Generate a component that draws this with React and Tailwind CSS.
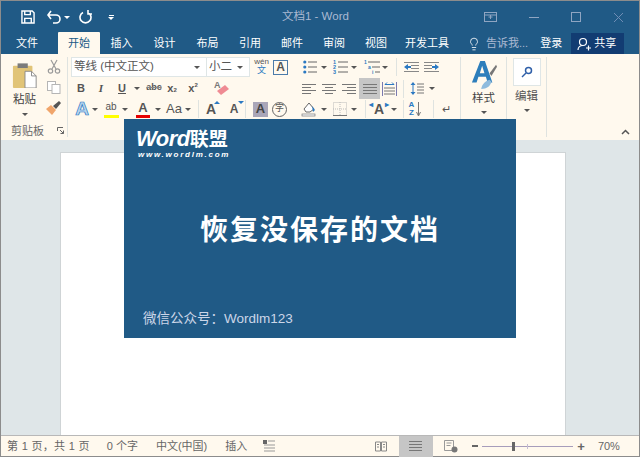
import { Lightbulb } from "lucide-react";

const font = "font-['Liberation_Sans','Noto_Sans_CJK_SC',sans-serif]";

function Caret({ className = "" }) {
  return <span className={`block w-0 h-0 border-x-[3px] border-x-transparent border-t-[3px] border-t-[#555] ${className}`} />;
}

function Slot({ w, className = "", children }) {
  return <div style={{ width: w }} className={`h-[18px] shrink-0 flex items-center justify-center ${className}`}>{children}</div>;
}

function Sep() {
  return <div className="w-px h-[18px] bg-[#dfe3e0] shrink-0" />;
}

function Lines({ rows, className = "" }) {
  return (
    <svg width="16" height="12" viewBox="0 0 16 12" className={className}>
      {rows.map(([x1, x2], i) => (
        <line key={i} x1={x1} x2={x2} y1={1.5 + i * 3} y2={1.5 + i * 3} stroke="#777" strokeWidth="1" />
      ))}
    </svg>
  );
}

function Bullets() {
  return (
    <svg width="14" height="14" viewBox="0 0 14 14">
      {[2, 7, 12].map((y) => (
        <g key={y}>
          <circle cx="1.8" cy={y} r="1.6" fill="#2b79c2" />
          <line x1="5" x2="14" y1={y} y2={y} stroke="#666" />
        </g>
      ))}
    </svg>
  );
}

function Numbers() {
  return (
    <svg width="15" height="16" viewBox="0 0 15 16">
      {[1, 2, 3].map((n) => (
        <g key={n}>
          <text x="0" y={n * 5} fontSize="5.5" fontWeight="700" fill="#2b79c2">{n}</text>
          <line x1="5" x2="15" y1={n * 5 - 2} y2={n * 5 - 2} stroke="#666" />
        </g>
      ))}
    </svg>
  );
}

function Multi() {
  return (
    <svg width="16" height="16" viewBox="0 0 16 16">
      <text x="0" y="5" fontSize="5" fontWeight="700" fill="#2b79c2">1</text>
      <line x1="4" x2="16" y1="3" y2="3" stroke="#666" />
      <text x="4" y="10" fontSize="5" fontWeight="700" fill="#2b79c2">a</text>
      <line x1="8" x2="16" y1="8" y2="8" stroke="#666" />
      <text x="8" y="15" fontSize="5" fontWeight="700" fill="#2b79c2">i</text>
      <line x1="11" x2="16" y1="13" y2="13" stroke="#666" />
    </svg>
  );
}

function Indent({ flip }) {
  return (
    <svg width="15" height="12" viewBox="0 0 15 12" className={flip ? "-scale-x-100" : ""}>
      {[1, 4, 7, 10].map((y) => (
        <line key={y} x1={y === 1 || y === 10 ? 0 : 7} x2="15" y1={y + 0.5} y2={y + 0.5} stroke="#888" />
      ))}
      <path d="M0 6l4-3v2h3v2H4v2z" fill="#2b79c2" />
    </svg>
  );
}

function Clipboard() {
  return (
    <svg width="26" height="26" viewBox="0 0 28 28">
      <rect x="1" y="4" width="21" height="24" rx="1" fill="#e1c477" />
      <rect x="6" y="1.5" width="11" height="5" fill="#7b7b7b" />
      <path d="M14 10h7l5 5v13H14z" fill="#fff" stroke="#888" />
      <path d="M21 10v5h5" fill="none" stroke="#888" />
    </svg>
  );
}

function Scissors() {
  return (
    <svg width="14" height="15" viewBox="0 0 14 15" fill="none" stroke="#9a9a9a" strokeWidth="1.2">
      <path d="M4 1l5 9M10 1L5 10" />
      <circle cx="3.5" cy="12" r="2.2" />
      <circle cx="10.5" cy="12" r="2.2" />
    </svg>
  );
}

function Copy() {
  return (
    <svg width="14" height="13" viewBox="0 0 14 13" fill="#fff" stroke="#b5b5b5">
      <rect x="0.5" y="0.5" width="8" height="9" />
      <rect x="5" y="3.5" width="8" height="9" />
    </svg>
  );
}

function Painter() {
  return (
    <svg width="15" height="14" viewBox="0 0 15 14">
      <path d="M0 8l5-4 5 5-4 5z" fill="#f0a56b" />
      <path d="M7 5l6-5 2 2-5 6z" fill="#555" />
    </svg>
  );
}

function Eraser() {
  return (
    <svg width="16" height="16" viewBox="0 0 16 16">
      <text x="0" y="8" fontSize="9" fontWeight="700" fill="#777">A</text>
      <path d="M3 11l8-6 4 4-8 6z" fill="#ef8b93" />
    </svg>
  );
}

function Bucket() {
  return (
    <svg width="16" height="16" viewBox="0 0 16 16">
      <path d="M3 8l5-6 5 6-4 3H5z" fill="#fff" stroke="#666" />
      <path d="M11 5l3 4-2 2z" fill="#2b79c2" />
      <rect x="1" y="13" width="13" height="2" fill="#fff" stroke="#777" strokeWidth="0.7" />
    </svg>
  );
}

function Borders() {
  return (
    <svg width="14" height="14" viewBox="0 0 14 14" fill="none" stroke="#bbb" strokeDasharray="1 1">
      <rect x="0.5" y="0.5" width="13" height="13" />
      <path d="M7 0v14M0 7h14" />
      <path d="M0 13.5h14" stroke="#777" strokeDasharray="none" />
    </svg>
  );
}

function StyleIcon() {
  return (
    <svg width="26" height="30" viewBox="0 0 28 32">
      <path d="M1 24L10 1h5l8 23h-5l-2-6H8l-2 6zM9.5 14h5L12 6z" fill="#2d7ebb" />
      <path d="M20 14l7-9 1 2-6 10z" fill="#777" />
      <path d="M11 31c1-6 5-9 9-10l2 2c-1 5-5 8-11 8z" fill="#8fbbdd" />
    </svg>
  );
}

function Font1() {
  return (
    <div className="flex items-center h-5">
      <div className="w-[136px] h-5 bg-white border border-[#dfe6e6] flex items-center justify-between px-[2px] text-[11.5px] text-[#555]">
        <span>等线 (中文正文)</span>
        <Caret className="mr-[4px]" />
      </div>
      <div className="w-[43px] h-5 bg-white border border-[#dfe6e6] border-l-0 flex items-center justify-between px-[2px] text-[11.5px] text-[#555]">
        <span>小二</span>
        <Caret className="mr-[4px]" />
      </div>
      <div className="w-[21px] ml-[1px] h-5 flex flex-col items-center leading-[9px] text-[8px] text-[#555]">
        <span>wén</span>
        <span className="text-[9px] text-[#2b79c2]">文</span>
      </div>
      <div className="ml-[1px] w-[15px] h-[15px] border border-[#4b7baa] flex items-center justify-center text-[12px] font-bold text-[#555]">A</div>
    </div>
  );
}

function Font2() {
  return (
    <div className="flex items-center mt-[2px] text-[#555]">
      <Slot w={18} className="ml-[1px] text-[11px] font-bold">B</Slot>
      <Slot w={22} className="text-[11px] italic font-['Liberation_Serif',serif] font-bold">I</Slot>
      <Slot w={20} className="text-[11px] font-bold underline">U</Slot>
      <Slot w={10}><Caret /></Slot>
      <Slot w={24} className="text-[9px] font-bold line-through decoration-[#888]">abc</Slot>
      <Slot w={12} className="text-[11px] font-bold">x<sub className="text-[6px] leading-none">2</sub></Slot>
      <Slot w={20} className="ml-[5px] text-[11px] font-bold">x<sup className="text-[6px] leading-none">2</sup></Slot>
      <Slot w={38}><Eraser /></Slot>
    </div>
  );
}

function Font3() {
  return (
    <div className="flex items-center mt-[3px] text-[#555]">
      <Slot w={20} className="ml-[1px] text-[19px] font-bold text-[#b9d6ef] [-webkit-text-stroke:0.7px_#2b79c2]">A</Slot>
      <Slot w={6}><Caret /></Slot>
      <Slot w={22} className="relative ml-[2px]">
        <span className="text-[10px] leading-none -mt-[5px]">ab</span>
        <span className="absolute left-[4px] bottom-0 w-[15px] h-[3px] bg-[#ffff00]" />
      </Slot>
      <Slot w={6}><Caret /></Slot>
      <Slot w={24} className="relative ml-[3px]">
        <span className="text-[13px] font-bold leading-none -mt-[3px]">A</span>
        <span className="absolute left-[5px] bottom-0 w-[14px] h-[3px] bg-[#e60000]" />
      </Slot>
      <Slot w={6}><Caret /></Slot>
      <Slot w={22} className="ml-[2px] text-[13px]">Aa</Slot>
      <Slot w={6}><Caret /></Slot>
      <Slot w={7} />
      <Sep />
      <Slot w={18} className="ml-[3px] text-[14px] font-bold relative">
        A<span className="absolute top-[1px] right-0 w-0 h-0 border-x-[3px] border-x-transparent border-b-[3px] border-b-[#2b79c2]" />
      </Slot>
      <Slot w={22} className="ml-[3px] text-[12px] font-bold relative">
        A<span className="absolute top-[1px] right-[1px] w-0 h-0 border-x-[3px] border-x-transparent border-t-[3px] border-t-[#2b79c2]" />
      </Slot>
      <Sep />
      <div className="ml-[7px] w-[15px] h-[15px] bg-[#aaa6b8] flex items-center justify-center text-[13px] font-bold text-[#444]">A</div>
      <div className="ml-[4px] w-[15px] h-[15px] rounded-full border border-[#666] flex items-center justify-center text-[9px]">字</div>
    </div>
  );
}

function Para() {
  return (
    <div className="w-[163px] shrink-0 pt-[3px] text-[#555]">
      <div className="flex items-center h-[20px]">
        <Slot w={18} className="ml-[4px]"><Bullets /></Slot>
        <Slot w={8} className="ml-[1px]"><Caret /></Slot>
        <Slot w={18} className="ml-[3px]"><Numbers /></Slot>
        <Slot w={8} className="ml-[1px]"><Caret /></Slot>
        <Slot w={18} className="ml-[5px]"><Multi /></Slot>
        <Slot w={8}><Caret /></Slot>
        <Slot w={7} />
        <Sep />
        <Slot w={20} className="ml-[4px]"><Indent /></Slot>
        <Slot w={20}><Indent flip /></Slot>
      </div>
      <div className="flex items-center mt-[1px] h-[21px]">
        <Slot w={20} className="ml-[2px]"><Lines rows={[[1, 15], [1, 10], [1, 15], [1, 10]]} /></Slot>
        <Slot w={20}><Lines rows={[[1, 15], [4, 12], [1, 15], [4, 12]]} /></Slot>
        <Slot w={20}><Lines rows={[[1, 15], [6, 15], [1, 15], [6, 15]]} /></Slot>
        <div className="w-[21px] h-[21px] bg-[#c6c6c6] flex items-center justify-center shrink-0"><Lines rows={[[1, 15], [1, 15], [1, 15], [1, 15]]} /></div>
        <Slot w={19}>
          <svg width="15" height="14" viewBox="0 0 15 14">
            <path d="M0.5 0v14M14.5 0v14" stroke="#7a7ab0" />
            <path d="M3 2.5h9M3 2.5l2-2M12 2.5l-2-2" stroke="#2b79c2" fill="none" />
            <path d="M2 6h11M2 9h11M2 12h11" stroke="#777" />
          </svg>
        </Slot>
        <Slot w={4} />
        <Sep />
        <Slot w={22} className="ml-[2px]">
          <svg width="14" height="15" viewBox="0 0 14 15">
            <path d="M3 1l2.5 3h-5zM3 14l2.5-3h-5zM2.5 4h1v7h-1z" fill="#2b79c2" />
            <path d="M7 3h7M7 6h7M7 9h7M7 12h7" stroke="#777" />
          </svg>
        </Slot>
        <Slot w={8}><Caret /></Slot>
      </div>
      <div className="flex items-center mt-[1px]">
        <Slot w={20} className="ml-[2px]"><Bucket /></Slot>
        <Slot w={8} className="ml-[1px]"><Caret /></Slot>
        <Slot w={18} className="ml-[3px]"><Borders /></Slot>
        <Slot w={8} className="ml-[1px]"><Caret /></Slot>
        <Slot w={7} />
        <Sep />
        <Slot w={22} className="ml-[2px] text-[14px] font-bold relative">
          A<span className="absolute -top-[1px] left-[1px] text-[8px] text-[#2b79c2]">◂</span>
          <span className="absolute -top-[1px] right-[1px] text-[8px] text-[#2b79c2]">▸</span>
        </Slot>
        <Slot w={8}><Caret /></Slot>
        <Slot w={5} />
        <Sep />
        <Slot w={22} className="text-[8px] leading-[8px] font-bold text-[#2b79c2] gap-[2px]">
          <span className="flex flex-col items-center"><span>A</span><span>Z</span></span>
          <svg width="5" height="15" viewBox="0 0 5 15"><path d="M2.5 0v13M0.5 10l2 4 2-4" stroke="#777" fill="none" /></svg>
        </Slot>
        <Slot w={7} />
        <Sep />
        <Slot w={24} className="text-[11px]">↵</Slot>
      </div>
    </div>
  );
}

export default function App() {
  const tabs = [["插入", 43], ["设计", 43], ["布局", 43], ["引用", 42], ["邮件", 42], ["审阅", 42], ["视图", 42]];

  return (
    <div className={`relative w-[640px] h-[457px] overflow-hidden flex flex-col border border-b-0 border-[#8c8c8c] bg-[#dfe6e8] ${font}`}>
      {/* title bar */}
      <div className="h-[32px] shrink-0 bg-[#205a86] flex items-center text-[#aab9d2] text-[11px]">
        <svg width="14" height="14" viewBox="0 0 15 15" className="ml-[20px]" fill="none" stroke="#fff" strokeWidth="1.5">
          <path d="M1 1h11l2 2v11H1z" />
          <path d="M4 1v4h6V1M4 14V9h7v5" />
        </svg>
        <svg width="14" height="14" viewBox="0 0 14 14" className="ml-[12px]" fill="none" stroke="#fff" strokeWidth="1.6">
          <path d="M1 5h8a4 4 0 0 1 0 8H6M4 1L1 5l3 4" />
        </svg>
        <Caret className="ml-[3px] border-t-white" />
        <svg width="14" height="14" viewBox="0 0 14 14" className="ml-[9px]" fill="none" stroke="#fff" strokeWidth="1.6">
          <path d="M4 2.5a5.5 5.5 0 1 0 5 0M9 0v4h4" />
        </svg>
        <div className="ml-[15px] flex flex-col items-center gap-[1px]">
          <span className="w-[5px] h-px bg-white" />
          <Caret className="border-t-white" />
        </div>
        <span className="ml-[168px] w-[70px] text-[11.5px] whitespace-nowrap">文档1 - Word</span>
        <svg width="13" height="10" viewBox="0 0 13 10" className="ml-[132px]" fill="none" stroke="#8fa5c2">
          <rect x="0.5" y="0.5" width="12" height="9" />
          <path d="M0 3h13M6.5 3v4M4.5 5h4" />
        </svg>
        <span className="ml-[32px] w-[10px] h-px bg-[#8fa5c2]" />
        <span className="ml-[32px] w-[10px] h-[10px] border border-[#8fa5c2]" />
        <svg width="11" height="11" viewBox="0 0 11 11" className="ml-[32px]" stroke="#6f8db5"><path d="M1 1l9 9M10 1l-9 9" /></svg>
      </div>

      {/* tabs */}
      <div className="h-[21px] shrink-0 bg-[#205a86] flex items-end text-[11px] text-white">
        <div className="w-[57px] h-[21px] flex items-center pl-[15px]">文件</div>
        <div className="w-[42px] h-[22px] bg-[#fff9ee] text-[#205a86] flex items-center justify-center rounded-t-[1px]">开始</div>
        {tabs.map(([t, w]) => (
          <div key={t} style={{ width: w }} className="h-[21px] flex items-center justify-center">{t}</div>
        ))}
        <div className="w-[52px] ml-[4px] h-[21px] flex items-center justify-center whitespace-nowrap">开发工具</div>
        <div className="h-[21px] ml-[14px] flex items-center text-[#aab9d2]">
          <Lightbulb size={14} strokeWidth={1.4} className="text-white" />
          <span className="ml-[5px] whitespace-nowrap">告诉我...</span>
        </div>
        <div className="h-[21px] ml-[12px] flex items-center">登录</div>
        <div className="ml-[9px] w-[53px] h-[21px] bg-[#123c72] flex items-center pl-[6px]">
          <svg width="14" height="14" viewBox="0 0 14 14" fill="none" stroke="#fff" strokeWidth="1.2">
            <circle cx="6" cy="5" r="3.5" />
            <path d="M1 13c0-3 2-4.5 5-4.5M9 11h5M11.5 8.5v5" />
          </svg>
          <span className="ml-[3px] whitespace-nowrap">共享</span>
        </div>
      </div>

      {/* ribbon */}
      <div className="h-[86px] shrink-0 bg-[#fff9ee] flex relative">
        <div className="w-[67px] shrink-0 border-r border-[#dfe3e0] my-[3px] relative flex flex-col">
          <div className="flex">
            <div className="w-[43px] flex flex-col items-center pt-[5px] pl-[4px]">
              <Clipboard />
              <span className="mt-[3px] text-[11.5px] leading-[16px] text-[#444]">粘贴</span>
              <Caret className="mt-[6px]" />
            </div>
            <div className="ml-[2px] flex flex-col items-center pt-[2px] gap-[7px]">
              <Scissors />
              <Copy />
              <Painter />
            </div>
          </div>
          <div className="mt-auto -mb-[2px] flex items-center pl-[10px] text-[11px] text-[#666]">
            <span>剪贴板</span>
            <svg width="7" height="7" viewBox="0 0 7 7" className="ml-[13px]" fill="none" stroke="#666">
              <path d="M0.5 4V0.5H6" />
              <path d="M3 3l3.5 3.5M6.5 3.5v3h-3" />
            </svg>
          </div>
        </div>
        <div className="w-[229px] shrink-0 pl-[3px] pt-[3px]">
          <Font1 />
          <Font2 />
          <Font3 />
        </div>
        <Para />
        <div className="w-[47px] shrink-0 border-x border-[#dfe3e0] my-[3px] flex flex-col items-center pt-[3px]">
          <StyleIcon />
          <span className="-mt-[2px] pt-[2px] text-[11.5px] leading-[16px] text-[#444]">样式</span>
          <Caret className="mt-[5px]" />
        </div>
        <div className="w-[40px] shrink-0 border-r border-[#dfe3e0] my-[3px] flex flex-col items-center pt-[1px]">
          <div className="w-[28px] h-[28px] bg-white border border-[#dfe6e6] flex items-center justify-center">
            <svg width="12" height="12" viewBox="0 0 12 12" fill="none" stroke="#2f5fa8" strokeWidth="1.5">
              <circle cx="7.5" cy="4.5" r="3" />
              <path d="M5 7l-4 4" />
            </svg>
          </div>
          <span className="mt-[2px] text-[11.5px] leading-[16px] text-[#555]">编辑</span>
          <Caret className="mt-[5px]" />
        </div>
        <div className="flex-1 flex items-end justify-end pr-[9px] pb-[5px]">
          <svg width="9" height="6" viewBox="0 0 9 6" fill="none" stroke="#555" strokeWidth="1.5"><path d="M1 5l3.5-3.5L8 5" /></svg>
        </div>
      </div>

      {/* document area */}
      <div className="flex-1 min-h-0 flex pt-[12px] pl-[59px] overflow-hidden">
        <div className="w-[506px] h-full bg-white border border-[#cfd4d6] border-b-0" />
      </div>

      {/* status bar */}
      <div className="h-[22px] shrink-0 bg-[#fff9ee] border-t border-b border-t-[#b8b8b8] border-b-[#8c8c8c] flex items-center text-[11px] text-[#666]">
        <span className="ml-[6px] whitespace-pre tracking-[0.3px]">第 1 页，共 1 页</span>
        <span className="ml-[17px] whitespace-pre">0 个字</span>
        <span className="ml-[18px]">中文(中国)</span>
        <span className="ml-[18px]">插入</span>
        <svg width="12" height="12" viewBox="0 0 12 12" className="ml-[16px]">
          <rect x="0" y="0" width="4" height="4" fill="#666" />
          <path d="M5 1h7M1 5h11M1 8h11M1 11h11" stroke="#999" />
        </svg>
        <svg width="12" height="11" viewBox="0 0 12 11" className="ml-[100px]" fill="none" stroke="#888">
          <path d="M0.5 1h5v9h-5zM6.5 1h5v9h-5z" />
          <path d="M2 3.5h2M2 6h2M8 3.5h2M8 6h2" />
        </svg>
        <div className="ml-[12px] w-[34px] h-[21px] bg-[#c6c6c6] flex items-center justify-center">
          <Lines rows={[[1, 14], [1, 14], [1, 14], [1, 14]]} />
        </div>
        <svg width="14" height="13" viewBox="0 0 14 13" className="ml-[11px]" fill="none" stroke="#999">
          <path d="M0.5 0.5h9v10h-9zM2.5 3h5M2.5 5.5h4" />
          <circle cx="10.5" cy="9.5" r="3" fill="#777" stroke="none" />
        </svg>
        <span className="ml-[14px] w-[6px] h-[2px] bg-[#666]" />
        <div className="ml-[4px] w-[91px] h-px bg-[#a79dbb] relative">
          <span className="absolute left-[30px] -top-[4px] w-[3px] h-[9px] bg-[#666]" />
          <span className="absolute left-[45px] -top-[2px] w-px h-[5px] bg-[#c5bdd3]" />
        </div>
        <span className="ml-[4px] text-[13px] leading-none font-bold">+</span>
        <span className="ml-[13px]">70%</span>
      </div>

      {/* pasted banner over the document */}
      <div className="absolute left-[123px] top-[118px] w-[392px] h-[219px] bg-[#205a86] text-white">
        <div className="absolute left-[12px] top-[9px] flex items-baseline leading-none">
          <span className="text-[22px] font-bold italic tracking-[-0.5px] font-['Liberation_Sans',sans-serif]">Word</span>
          <span className="text-[19px] font-bold">联盟</span>
        </div>
        <div className="absolute left-[14px] top-[32px] text-[8px] font-bold italic tracking-[1.75px] leading-none font-['Liberation_Sans',sans-serif]">www.wordlm.com</div>
        <div className="absolute left-0 right-0 top-[92px] text-center text-[28px] font-bold leading-[40px] tracking-[2px]">恢复没保存的文档</div>
        <div className="absolute left-[19px] top-[191px] text-[13.5px] leading-[18px] text-[#ccd6e8] whitespace-nowrap">微信公众号：Wordlm123</div>
      </div>
    </div>
  );
}
